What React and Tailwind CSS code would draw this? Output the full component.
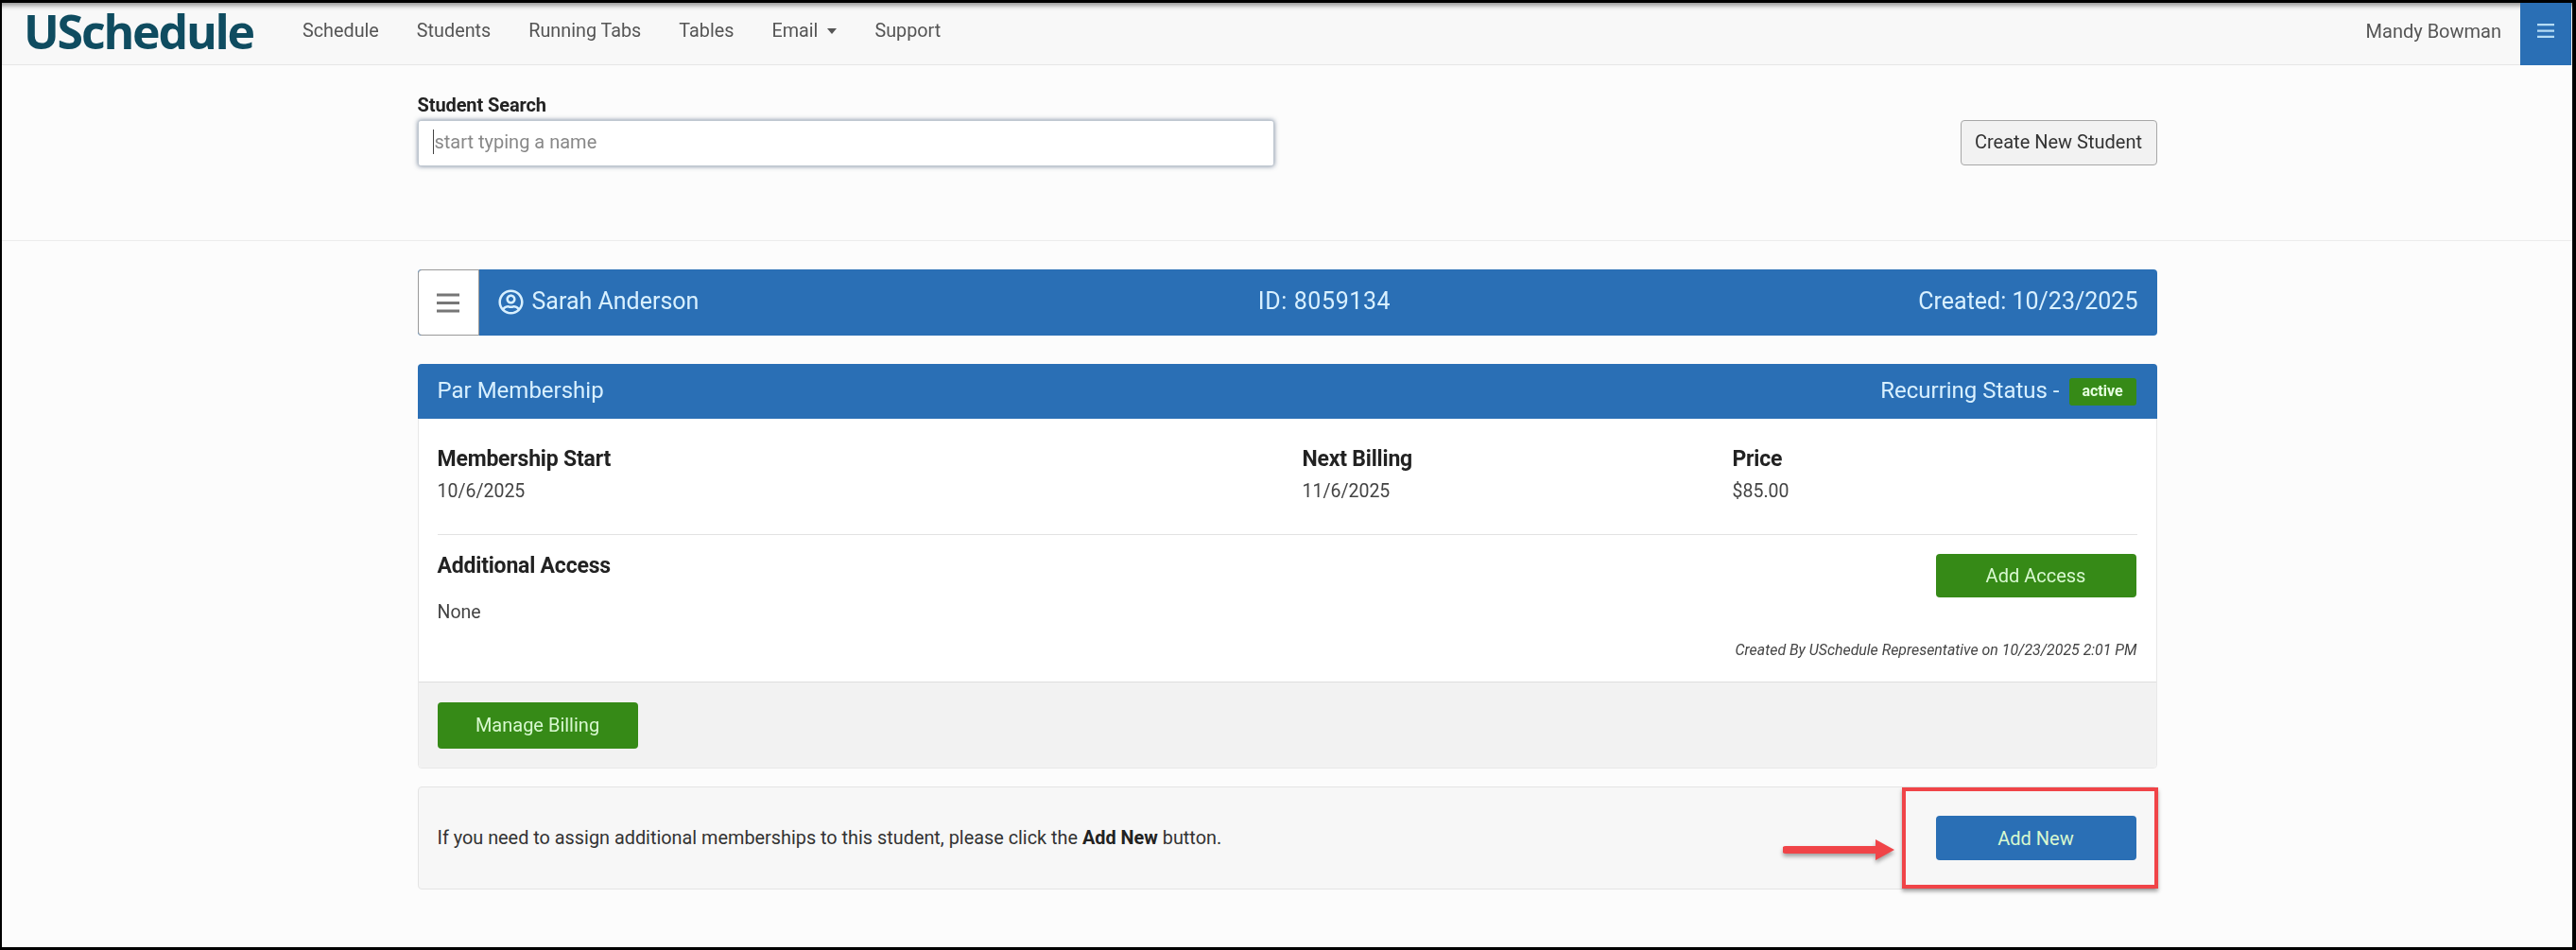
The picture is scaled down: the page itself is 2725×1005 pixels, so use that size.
import React from "react";
import { FaRegUserCircle } from "react-icons/fa";

const Burger = ({ className }) => (
  <svg viewBox="0 0 24 21" className={className} fill="none" stroke="currentColor" strokeWidth="3">
    <path d="M0 2h24M0 10.500h24M0 19h24" />
  </svg>
);

const Btn = ({ children, className }) => (
  <button className={"flex w-[212px] items-center justify-center rounded-[4px] text-[20px] text-[#d8f8d0] " + className}>
    {children}
  </button>
);

export default function App() {
  return (
    <div className="h-[1005px] w-[2725px] overflow-hidden bg-black pt-[3px] pr-[4px] pb-[3px] pl-[2px] font-['Roboto',sans-serif]">
      <div className="flex h-full flex-col bg-[#fcfcfc] blur-[0.6px]">
        <nav className="flex h-[66px] shrink-0 items-center border-b border-[#e6e6e6] bg-[#f8f8f8] pb-[6px] shadow-[inset_0_6px_5px_-3px_rgba(0,0,0,0.4)]">
          <span className="ml-[23px] w-[295px] font-['Open_Sans',sans-serif] text-[50px] leading-none font-bold tracking-[-2.2px] text-[#0f4c60]">
            USchedule
          </span>
          <div className="flex items-center gap-[40px] text-[19.800px] text-[#555]">
            <span>Schedule</span>
            <span>Students</span>
            <span>Running Tabs</span>
            <span>Tables</span>
            <span className="flex items-center gap-[10px]">
              Email
              <span className="h-0 w-0 border-x-[5px] border-t-[6px] border-x-transparent border-t-[#555]" />
            </span>
            <span>Support</span>
          </div>
          <span className="mr-[20px] ml-auto text-[20px] text-[#555]">Mandy Bowman</span>
          <div className="mr-[1px] -mb-[6px] flex h-[66px] w-[54px] items-center justify-center bg-[#2a6fb5] pb-[6px] text-[#b5dcf5]">
            <Burger className="h-[17px] w-[18px]" />
          </div>
        </nav>

        <div className="h-[186px] shrink-0 border-b border-[#ececec]">
          <div className="mx-auto flex w-[1840px] items-start justify-between pt-[30px]">
            <div className="w-[906px]">
              <label className="block h-[25px] text-[20px] leading-[25px] font-bold tracking-[-0.1px] text-[#222]">
                Student Search
              </label>
              <div className="mt-[3px] flex h-[49px] items-center rounded-[3px] border border-[#bfc7d0] bg-white pb-[3px] pl-[15px] text-[20px] text-[#888] shadow-[0_0_5px_rgba(70,90,120,0.7)]">
                <span className="mr-[1px] h-[26px] w-[1px] bg-[#444]" />
                start typing a name
              </div>
            </div>
            <button className="mt-[28px] flex h-[48px] w-[208px] items-center justify-center rounded-[4px] border border-[#a8a8a8] bg-[#f2f2f2] pb-[3px] text-[20px] text-[#333]">
              Create New Student
            </button>
          </div>
        </div>

        <main className="mx-auto w-[1840px] pt-[30px]">
          <section className="flex h-[70px] items-center overflow-hidden rounded-[4px] bg-[#2a6fb5] text-[25px] text-[#d8f0ff]">
            <div className="flex h-full w-[65px] shrink-0 items-center justify-center rounded-l-[4px] border border-[#999] bg-white text-[#777]">
              <Burger className="h-[21px] w-[24px]" />
            </div>
            <div className="grid flex-1 grid-cols-3 items-center pr-[20px] pb-[2px] pl-[20px]">
              <div className="flex items-center gap-[9px]">
                <FaRegUserCircle className="h-[27px] w-[27px]" />
                Sarah Anderson
              </div>
              <div className="pl-[226px] text-[25px] tracking-[0.6px]">ID: 8059134</div>
              <div className="text-right">Created: 10/23/2025</div>
            </div>
          </section>

          <section className="mt-[30px] rounded-[4px] border border-[#e8e8e8] bg-white">
            <header className="-m-px flex h-[58px] items-center justify-between rounded-t-[4px] bg-[#2a6fb5] pr-[22px] pl-[21px] text-[24px] text-[#d8f0ff]">
              <span className="pb-[2px]">Par Membership</span>
              <div className="flex items-center gap-[10px]">
                <span className="pb-[2px]">Recurring Status -</span>
                <span className="flex h-[29px] w-[71px] items-center justify-center rounded-[3px] bg-[#368a17] text-[16px] font-bold text-[#e6ffe0]">
                  active
                </span>
              </div>
            </header>
            <div className="px-[20px] pt-[31px]">
              <div className="grid grid-cols-[915px_455px_1fr]">
                {[
                  ["Membership Start", "10/6/2025"],
                  ["Next Billing", "11/6/2025"],
                  ["Price", "$85.00"],
                ].map(([k, v]) => (
                  <div key={k}>
                    <div className="text-[23px] leading-[26px] font-bold tracking-[-0.2px] text-[#222]">{k}</div>
                    <div className="mt-[9px] text-[19.500px] leading-[24px] text-[#444]">{v}</div>
                  </div>
                ))}
              </div>
              <hr className="mt-[33px] border-t border-[#e2e2e2]" />
              <div className="mt-[20px] flex items-start justify-between">
                <div>
                  <div className="text-[23px] leading-[26px] font-bold tracking-[-0.2px] text-[#222]">Additional Access</div>
                  <div className="mt-[24px] text-[19.500px] leading-[24px] text-[#444]">None</div>
                </div>
                <Btn className="mr-[1px] h-[46px] bg-[#368a17] pb-[1px]">Add Access</Btn>
              </div>
              <div className="mt-[18px] pb-[23px] text-right text-[15.900px] leading-[20px] text-[#444] italic">
                Created By USchedule Representative on 10/23/2025 2:01 PM
              </div>
            </div>
            <footer className="flex h-[91px] items-center rounded-b-[4px] border-t border-[#dedede] bg-[#f2f2f2] pl-[20px]">
              <Btn className="h-[49px] bg-[#368a17]">Manage Billing</Btn>
            </footer>
          </section>

          <section className="relative mt-[19px] flex h-[109px] items-center justify-between rounded-[4px] border border-[#e4e4e4] bg-[#f7f7f7] pr-[21px] pl-[20px]">
            <p className="text-[19.850px] text-[#333]">
              If you need to assign additional memberships to this student, please click the{" "}
              <b className="font-bold text-[#222]">Add New</b> button.
            </p>
            <Btn className="h-[47px] bg-[#2a6fb5] text-[#d8f0ff]">Add New</Btn>
            <div className="absolute top-0 right-[-2px] h-[107px] w-[271px] border-[4px] border-[#f04448] shadow-[0_3px_4px_rgba(0,0,0,0.35)]" />
            <svg
              viewBox="0 0 118 22"
              className="absolute top-[55px] left-[1443px] h-[22px] w-[118px]"
              style={{ filter: "drop-shadow(0 3px 2px rgba(0,0,0,0.35))" }}
            >
              <path d="M3 7h95V0l20 11-20 11v-7H3a4 4 0 0 1 0-8z" fill="#f04448" />
            </svg>
          </section>
        </main>
      </div>
    </div>
  );
}
